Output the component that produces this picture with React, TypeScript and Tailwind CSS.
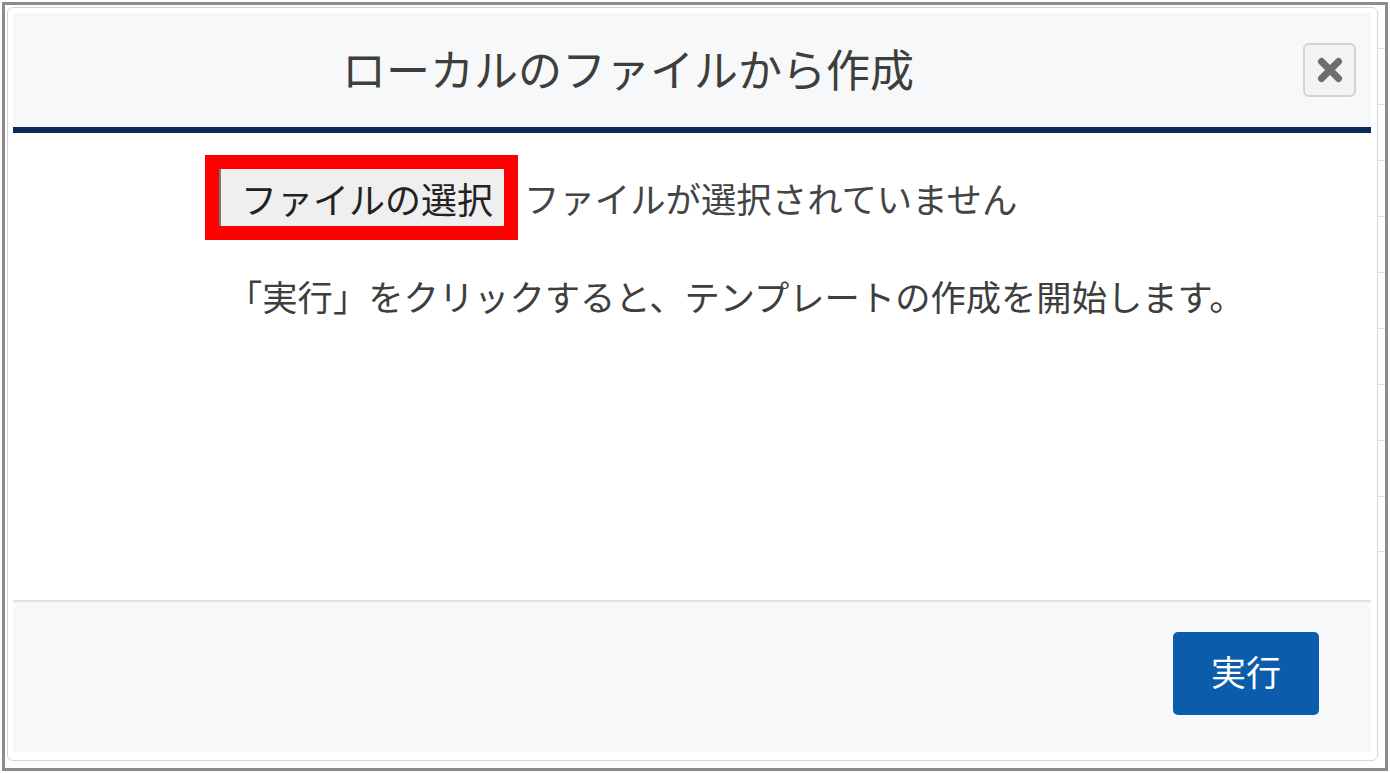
import { useState } from "react";

const stripRows = [44, 56, 56, 56, 56, 56, 56, 56, 56, 55];

export default function App() {
  const [fileName] = useState<string | null>(null);

  return (
    <div
      className="w-[1390px] h-[773px] bg-white p-[2px] text-[#3e3e3c]"
      style={{ fontFamily: '"Noto Sans CJK JP", "Noto Sans", sans-serif' }}
    >
      <div className="h-full border-[3px] border-[#8c8c8c] flex">
        {/* Modal */}
        <div className="flex-1 ml-[2px] mt-[2px] mb-[7px] border border-[#d6d6d6] rounded-[6px] bg-white pt-[5px] pl-[5px] pr-[6px] pb-[8px] flex flex-col">
          {/* Header */}
          <div className="h-[114px] bg-[#f7f8fa] flex items-center shrink-0">
            <div className="flex-1 text-center pr-[60px] pb-[4px] text-[44px] leading-none">
              ローカルのファイルから作成
            </div>
            <button className="w-[53px] h-[54px] mr-[15px] rounded-[6px] border-2 border-[#d3d3d3] bg-[#f3f3f3] flex items-center justify-center">
              <svg width="26" height="26" viewBox="0 0 26 26">
                <path
                  d="M4.5 4.5 L21.5 21.5 M21.5 4.5 L4.5 21.5"
                  stroke="#6e6e6e"
                  strokeWidth="7"
                  strokeLinecap="round"
                />
              </svg>
            </button>
          </div>
          <div className="h-[6px] bg-[#0c2b57] shrink-0" />

          {/* Body */}
          <div className="flex-1 pt-[22px] flex flex-col">
            <div className="flex items-center pl-[192px]">
              <div className="border-[14px] border-[#ff0000] flex">
                <div className="h-[57px] bg-[#efefef] border-l-2 border-[#7a7a7a] pl-[20px] pr-[11px] flex items-center text-[36px] leading-none text-[#222]">
                  ファイルの選択
                </div>
              </div>
              <span className="ml-[6px] text-[35.4px] leading-none text-[#444]">
                {fileName ?? "ファイルが選択されていません"}
              </span>
            </div>
            <p className="mt-[38px] pl-[214px] text-[35.3px] leading-[36px]">
              「実行」をクリックすると、テンプレートの作成を開始します。
            </p>
          </div>

          {/* Footer */}
          <div className="h-[2px] bg-[#e2e2e2] shrink-0" />
          <div className="h-[150px] bg-[#f7f8fa] flex justify-end items-start pt-[30px] pr-[52px] shrink-0">
            <button className="w-[146px] h-[83px] rounded-[5px] bg-[#0b5cab] text-white text-[35px] leading-none pb-[6px] flex items-center justify-center">
              実行
            </button>
          </div>
        </div>

        {/* page behind the modal */}
        <div className="w-[7px] flex flex-col">
          {stripRows.map((h, i) => (
            <div
              key={i}
              className="border-b border-[#e2e2e2] shrink-0"
              style={{ height: h }}
            />
          ))}
        </div>
      </div>
    </div>
  );
}
